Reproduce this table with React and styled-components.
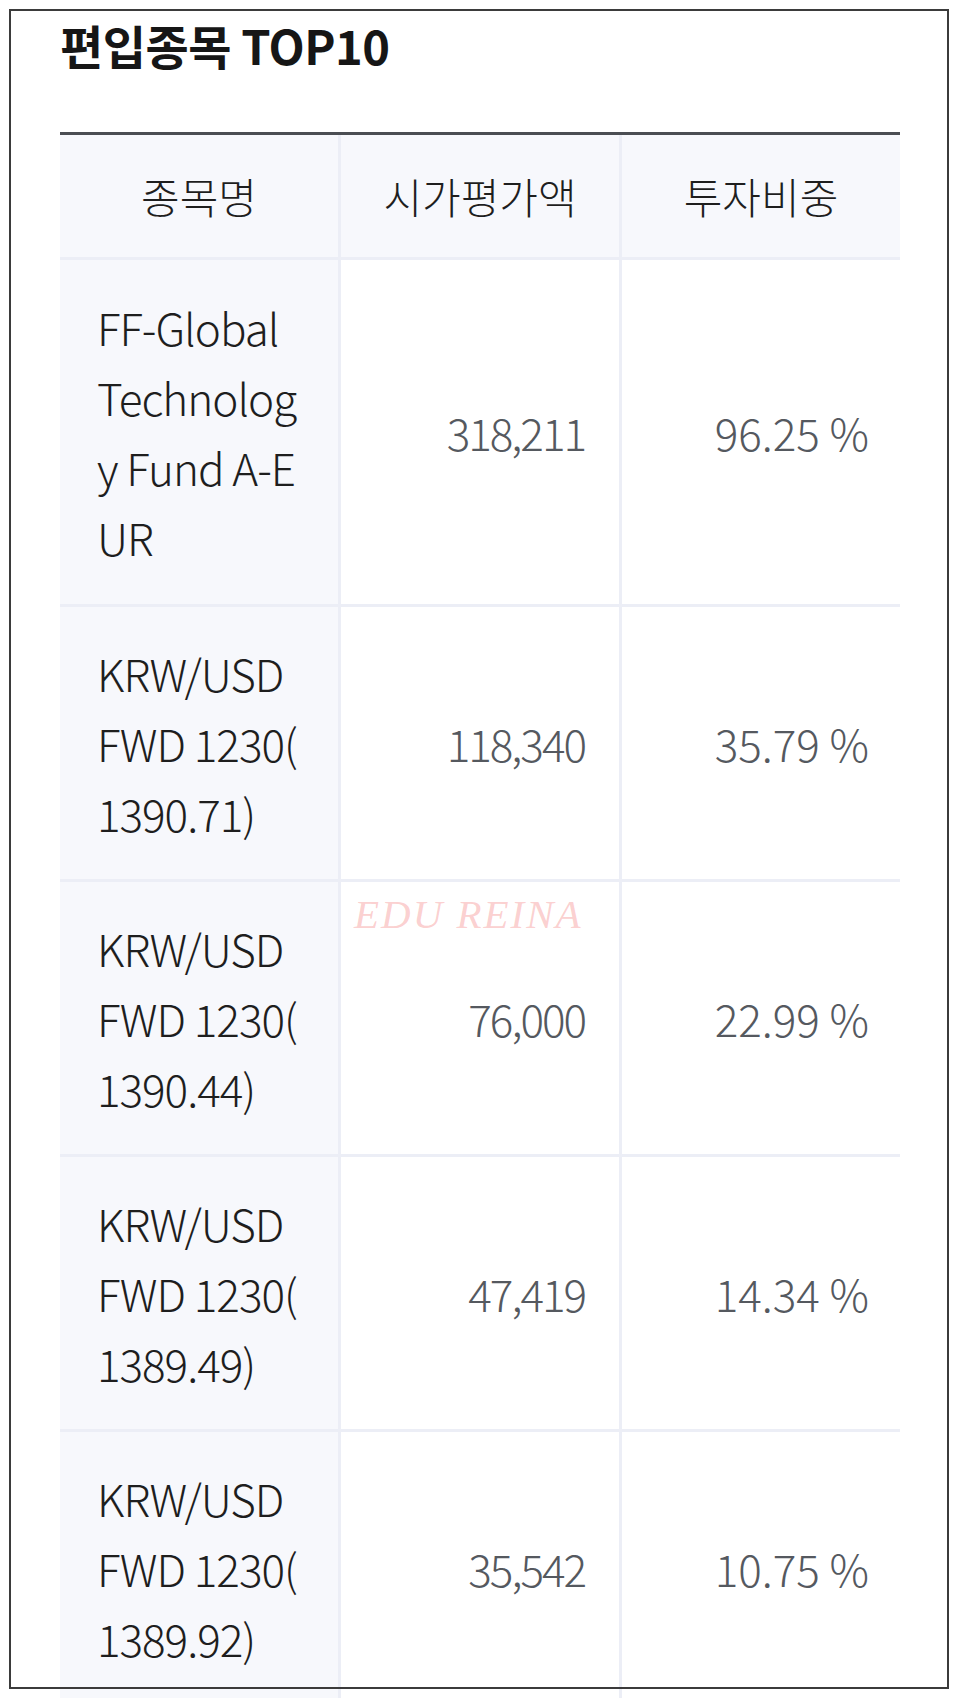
import React from "react";
import styled, { createGlobalStyle } from "styled-components";

const Global = createGlobalStyle`
  html, body { margin: 0; padding: 0; background: #ffffff; }
  body { font-family: "Noto Sans CJK KR", "Noto Sans", sans-serif; }
`;

const Frame = styled.div`
  box-sizing: border-box;
  position: relative;
  margin: 9px;
  width: 940px;
  height: 1680px;
  padding: 0 49px 0 51px;
  &::after {
    content: "";
    position: absolute;
    inset: 0;
    border: 2px solid #3b3b3b;
    pointer-events: none;
    z-index: 2;
  }
`;

const Title = styled.h2`
  margin: 0;
  padding-top: 8px;
  font-size: 47px;
  font-weight: 700;
  line-height: 56px;
  color: #161616;
  letter-spacing: -0.5px;
`;

const Table = styled.div`
  margin-top: 59px;
  display: grid;
  grid-template-columns: repeat(3, 1fr);
  gap: 3px;
  background: #eceef6;
  border-top: 3px solid #4b4e53;
`;

const HeadCell = styled.div`
  background: #f7f8fc;
  text-align: center;
  font-size: 42px;
  font-weight: 300;
  line-height: 71px;
  padding: 25px 0 26px;
  color: #1e1e1e;
`;

const NameCell = styled.div`
  background: #f7f8fc;
  padding: ${(p) => (p.$tall ? "32px 37px 32px" : "31px 37px 31px")};
  font-size: 44px;
  font-weight: 300;
  line-height: 70px;
  color: #1e1e1e;
  word-break: break-all;
  line-break: anywhere;
  letter-spacing: -1px;
`;

const ValueCell = styled.div`
  background: #ffffff;
  display: flex;
  align-items: center;
  justify-content: flex-end;
  padding-right: ${(p) => p.$pr}px;
  font-size: 44px;
  font-weight: 300;
  color: #55595f;
  letter-spacing: ${(p) => p.$ls}px;
`;

const Watermark = styled.div`
  position: absolute;
  left: 345px;
  top: 881px;
  font-family: "Liberation Serif", serif;
  font-style: italic;
  font-size: 41px;
  letter-spacing: 2px;
  color: rgba(246, 150, 150, 0.45);
  z-index: 3;
  pointer-events: none;
`;

const rows = [
  ["FF-Global Technology Fund A-EUR", "318,211", "96.25 %"],
  ["KRW/USD FWD 1230(1390.71)", "118,340", "35.79 %"],
  ["KRW/USD FWD 1230(1390.44)", "76,000", "22.99 %"],
  ["KRW/USD FWD 1230(1389.49)", "47,419", "14.34 %"],
  ["KRW/USD FWD 1230(1389.92)", "35,542", "10.75 %"],
];

export default function App() {
  return (
    <>
      <Global />
      <Frame>
        <Title>편입종목 TOP10</Title>
        <Table>
          <HeadCell>종목명</HeadCell>
          <HeadCell>시가평가액</HeadCell>
          <HeadCell>투자비중</HeadCell>
          {rows.map(([name, value, pct], i) => (
            <React.Fragment key={name + value}>
              <NameCell $tall={i === 0}>{name}</NameCell>
              <ValueCell $pr={34} $ls={-2}>{value}</ValueCell>
              <ValueCell $pr={31} $ls={0}>{pct}</ValueCell>
            </React.Fragment>
          ))}
        </Table>
        <Watermark>EDU REINA</Watermark>
      </Frame>
    </>
  );
}
